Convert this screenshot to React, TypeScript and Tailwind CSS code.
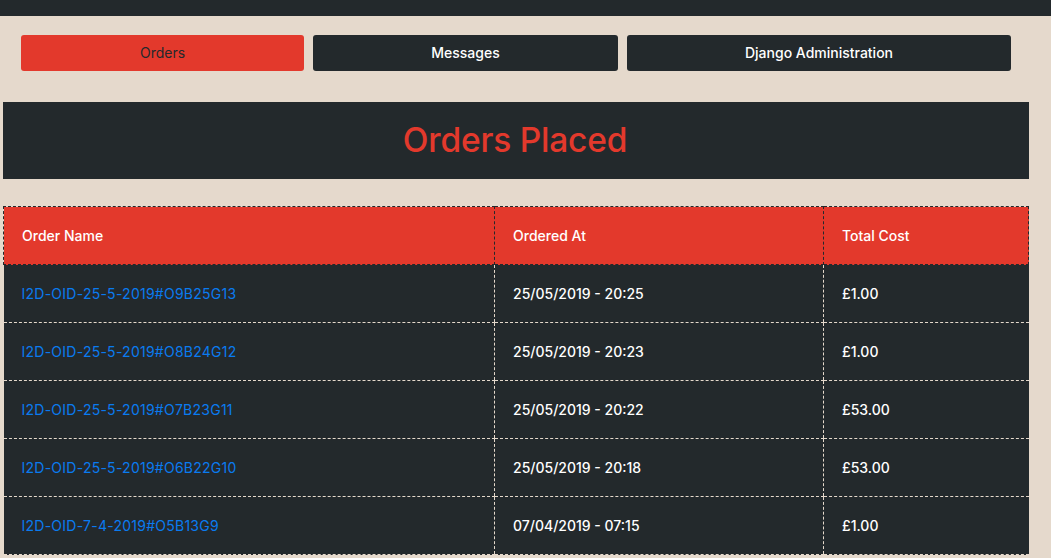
import React from 'react';

const orders = [
  { name: 'I2D-OID-25-5-2019#O9B25G13', at: '25/05/2019 - 20:25', cost: '£1.00' },
  { name: 'I2D-OID-25-5-2019#O8B24G12', at: '25/05/2019 - 20:23', cost: '£1.00' },
  { name: 'I2D-OID-25-5-2019#O7B23G11', at: '25/05/2019 - 20:22', cost: '£53.00' },
  { name: 'I2D-OID-25-5-2019#O6B22G10', at: '25/05/2019 - 20:18', cost: '£53.00' },
  { name: 'I2D-OID-7-4-2019#O5B13G9', at: '07/04/2019 - 07:15', cost: '£1.00' },
];

export default function App() {
  return (
    <div className="min-h-[558px] bg-[#e5d9cc] font-['Inter','Liberation_Sans',sans-serif] text-[14px] overflow-hidden">
      <div className="h-4 bg-[#23292c]" />

      {/* Nav buttons */}
      <nav className="flex gap-[9px] pl-[21px] pt-[19px]">
        <button className="w-[283px] h-9 pb-px rounded-[3px] bg-[#e3392c] text-[#23292c]">Orders</button>
        <button className="w-[305px] h-9 pb-px rounded-[3px] bg-[#23292c] text-white font-medium">Messages</button>
        <button className="w-[384px] h-9 pb-px rounded-[3px] bg-[#23292c] text-white font-medium">Django Administration</button>
      </nav>

      <div className="w-[1026px] ml-[3px] mt-[31px]">
        <header className="h-[77px] bg-[#23292c] flex items-center justify-center">
          <h1 className="text-[33.5px] font-medium text-[#e3392c] tracking-[-0.2px] pr-[2px]">Orders Placed</h1>
        </header>

        <table className="w-full mt-[27px] border-collapse text-left">
          <thead>
            <tr className="h-[58px] bg-[#e3392c] text-white">
              <th className="w-[491px] pl-[18px] font-medium border border-dashed border-[#23292c]">Order Name</th>
              <th className="w-[329px] pl-[18px] font-medium border border-dashed border-[#23292c]">Ordered At</th>
              <th className="pl-[18px] font-medium border border-dashed border-[#23292c]">Total Cost</th>
            </tr>
          </thead>
          <tbody>
            {orders.map((o) => (
              <tr key={o.name} className="h-[58px] bg-[#23292c]">
                <td className="pl-[18px] border-b border-dashed border-[#e5d9cc]">
                  <a className="text-[#0a7bf0] tracking-[0.25px]" href="#">{o.name}</a>
                </td>
                <td className="pl-[18px] text-white font-medium border-b border-l border-dashed border-[#e5d9cc]">{o.at}</td>
                <td className="pl-[18px] text-white font-medium border-b border-l border-dashed border-[#e5d9cc]">{o.cost}</td>
              </tr>
            ))}
          </tbody>
        </table>
      </div>
    </div>
  );
}
